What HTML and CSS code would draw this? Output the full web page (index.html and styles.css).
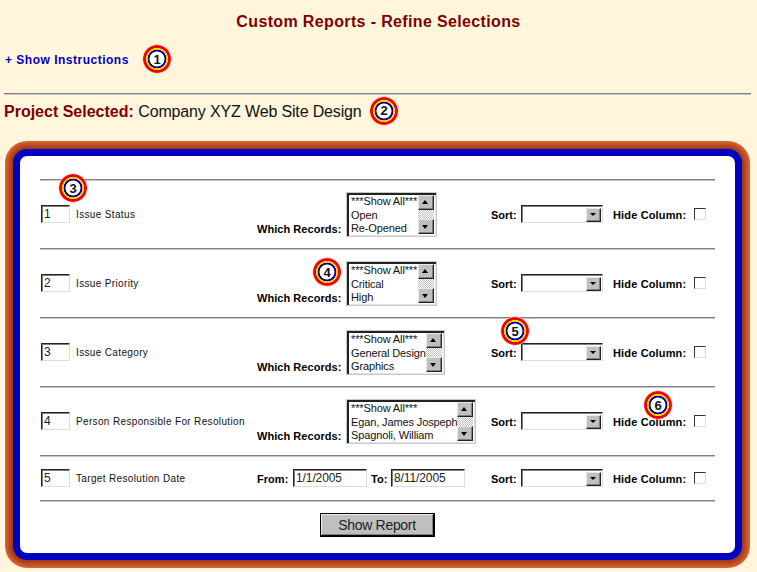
FILE: index.html
```html
<!DOCTYPE html>
<html lang="en">
<head>
<meta charset="utf-8">
<title>Custom Reports - Refine Selections</title>
<link rel="stylesheet" href="styles.css">
</head>
<body>
<h1 class="title">Custom Reports - Refine Selections</h1>
<div class="instructions">
  <a class="show-link" href="#"><span class="plus">+</span> Show Instructions</a>
  <span class="badge badge-1">1</span>
</div>
<hr class="rule page-rule">
<div class="project">
  <strong>Project Selected:</strong> <span class="project-name">Company XYZ Web Site Design</span>
  <span class="badge badge-2">2</span>
</div>
<form class="panel">
  <hr class="rule">
  <div class="row">
    <span class="badge badge-3">3</span>
    <div class="field"><input class="order" type="text" value="1"><span class="name">Issue Status</span></div>
    <div class="filter">
      <label class="lab">Which Records:</label>
      <div class="listbox w91">
        <ul class="opts"><li>***Show All***</li><li>Open</li><li>Re-Opened</li></ul>
        <div class="scroll"><span class="sbtn up"></span><span class="track"></span><span class="sbtn down"></span></div>
      </div>
    </div>
    <div class="sort"><label class="lab">Sort:</label><div class="combo"><span class="sbtn down"></span></div></div>
    <div class="hide"><label class="lab">Hide Column:</label><input class="check" type="checkbox"></div>
  </div>
  <hr class="rule">
  <div class="row">
    <span class="badge badge-4">4</span>
    <div class="field"><input class="order" type="text" value="2"><span class="name">Issue Priority</span></div>
    <div class="filter">
      <label class="lab">Which Records:</label>
      <div class="listbox w91">
        <ul class="opts"><li>***Show All***</li><li>Critical</li><li>High</li></ul>
        <div class="scroll"><span class="sbtn up"></span><span class="track"></span><span class="sbtn down"></span></div>
      </div>
    </div>
    <div class="sort"><label class="lab">Sort:</label><div class="combo"><span class="sbtn down"></span></div></div>
    <div class="hide"><label class="lab">Hide Column:</label><input class="check" type="checkbox"></div>
  </div>
  <hr class="rule">
  <div class="row">
    <span class="badge badge-5">5</span>
    <div class="field"><input class="order" type="text" value="3"><span class="name">Issue Category</span></div>
    <div class="filter">
      <label class="lab">Which Records:</label>
      <div class="listbox w99">
        <ul class="opts"><li>***Show All***</li><li>General Design</li><li>Graphics</li></ul>
        <div class="scroll"><span class="sbtn up"></span><span class="track"></span><span class="sbtn down"></span></div>
      </div>
    </div>
    <div class="sort"><label class="lab">Sort:</label><div class="combo"><span class="sbtn down"></span></div></div>
    <div class="hide"><label class="lab">Hide Column:</label><input class="check" type="checkbox"></div>
  </div>
  <hr class="rule">
  <div class="row">
    <span class="badge badge-6">6</span>
    <div class="field"><input class="order" type="text" value="4"><span class="name">Person Responsible For Resolution</span></div>
    <div class="filter">
      <label class="lab">Which Records:</label>
      <div class="listbox w130">
        <ul class="opts"><li>***Show All***</li><li>Egan, James Jospeph</li><li>Spagnoli, William</li></ul>
        <div class="scroll"><span class="sbtn up"></span><span class="track"></span><span class="sbtn down"></span></div>
      </div>
    </div>
    <div class="sort"><label class="lab">Sort:</label><div class="combo"><span class="sbtn down"></span></div></div>
    <div class="hide"><label class="lab">Hide Column:</label><input class="check" type="checkbox"></div>
  </div>
  <hr class="rule">
  <div class="row row-date">
    <div class="field"><input class="order" type="text" value="5"><span class="name">Target Resolution Date</span></div>
    <div class="filter date-filter">
      <label class="lab">From:</label><input class="date" type="text" value="1/1/2005">
      <label class="lab to">To:</label><input class="date" type="text" value="8/11/2005">
    </div>
    <div class="sort"><label class="lab">Sort:</label><div class="combo"><span class="sbtn down"></span></div></div>
    <div class="hide"><label class="lab">Hide Column:</label><input class="check" type="checkbox"></div>
  </div>
  <hr class="rule">
  <div class="actions"><button class="submit" type="button">Show Report</button></div>
</form>
</body>
</html>
```

FILE: styles.css
```css
* { box-sizing: border-box; }
html, body { margin: 0; height: 572px; overflow: hidden; }
body { background: #fff6dc; font-family: "Liberation Sans", Arial, sans-serif; color: #000; }

.title { margin: 0; height: 48px; padding-top: 12px; text-align: center; font-size: 16px; line-height: 20px; font-weight: bold; color: #800000; letter-spacing: 0.36px; }
.instructions { height: 45px; padding-left: 5px; display: flex; align-items: flex-start; position: relative; }
.show-link { display: block; line-height: 24px; font-size: 12px; font-weight: bold; color: #0000c0; text-decoration: none; letter-spacing: 0.5px; }

.rule { display: block; height: 2px; margin: 0; border: 0; border-top: 1px solid #808080; border-bottom: 1px solid #c8c8c8; }
.page-rule { margin: 0 6px 0 4px; }

.project { position: relative; height: 54px; padding: 6px 0 0 4px; font-size: 16px; line-height: 22px; white-space: nowrap; }
.project strong { color: #800000; }
.project-name { letter-spacing: -0.15px; color: #111; }

.panel { margin: 0 15px 0 13px; height: 411px; padding: 23px 20px 0 20px; border: 7px solid #0000c0; border-radius: 14px; background: #fff; background-clip: padding-box;
  box-shadow: 0 0 0 1px #a23a18, 0 0 0 2px #a83e1a, 0 0 0 3px #b0441e, 0 0 0 4px #b84a22, 0 0 0 5px #c05026, 0 0 0 6px #c8562a, 0 0 0 7px #d05c2e, 0 0 0 8px #d8663a; }

.row { position: relative; height: 67px; display: flex; align-items: flex-start; padding-left: 1px; }
.row-date { height: 43px; }

.field { width: 216px; height: 18px; margin-top: 24px; display: flex; align-items: center; flex: none; }
.row-date .field { margin-top: 12px; }
.order { width: 29px; height: 18px; padding: 0 0 0 2px; font: 12px/14px "Liberation Sans", Arial, sans-serif; color: #222; border: 1px solid; border-color: #222 #ddd #ddd #222; background: #fff; box-shadow: inset 1px 1px 0 #808080; }
.name { margin-left: 6px; font-size: 10px; letter-spacing: 0.35px; white-space: nowrap; color: #111; }

.lab { font-size: 11px; font-weight: bold; white-space: nowrap; line-height: 13px; }

.filter { width: 234px; flex: none; display: flex; align-items: flex-end; height: 56px; }
.filter .lab { width: 86px; margin-bottom: 1px; letter-spacing: 0.05px; }
.listbox { margin: 11px 0 0 3px; height: 45px; display: flex; padding: 2px 2px 2px 3px; background: #fff; border: 1px solid #c8c8c8; box-shadow: inset 2px 2px 0 #222, inset -1px -1px 0 #e4e4e4; }
.w91 { width: 91px; }
.w99 { width: 99px; }
.w130 { width: 130px; }
.opts { flex: 1; min-width: 0; margin: 0; padding: 0 0 0 1px; list-style: none; font-size: 11px; letter-spacing: -0.12px; line-height: 13.5px; white-space: nowrap; color: #111; }
.scroll { width: 16px; flex: none; display: flex; flex-direction: column; }
.track { flex: 1; background: repeating-conic-gradient(#c0c0c0 0 25%, #fff 0 50%) 0 0 / 2px 2px; }
.sbtn { display: block; position: relative; width: 16px; height: 15px; flex: none; background: #c0c0c0; border: 1px solid; border-color: #e8e8e8 #222 #222 #e8e8e8; box-shadow: inset -1px -1px 0 #808080; }
.sbtn::after { content: ""; position: absolute; left: 3px; width: 0; height: 0; border-left: 3.5px solid transparent; border-right: 3.5px solid transparent; }
.up::after { top: 4px; border-bottom: 4px solid #000; }
.down::after { top: 5px; border-top: 4px solid #000; }

.date-filter { height: 18px; margin-top: 12px; align-items: center; }
.date-filter .lab { width: 36px; margin: 2px 0 0; }
.date-filter .lab.to { width: 20px; margin-left: 4px; }
.date { width: 74px; height: 18px; padding: 0 0 0 2px; font: 12px/14px "Liberation Sans", Arial, sans-serif; color: #222; letter-spacing: -0.1px; border: 1px solid; border-color: #222 #ddd #ddd #222; background: #fff; box-shadow: inset 1px 1px 0 #808080; }

.sort { width: 122px; flex: none; margin-top: 24px; height: 18px; display: flex; align-items: center; }
.row-date .sort, .row-date .hide { margin-top: 12px; }
.sort .lab { width: 30px; padding-top: 3px; }
.combo { width: 82px; height: 18px; display: flex; justify-content: flex-end; padding: 2px 1px 1px 0; background: #fff; border: 1px solid; border-color: #222 #ddd #ddd #222; box-shadow: inset 1px 1px 0 #808080; }
.combo .sbtn { width: 15px; height: 14px; }
.combo .sbtn::after { left: 3px; top: 4px; border-left-width: 3px; border-right-width: 3px; border-top-width: 3px; }

.hide { margin-top: 24px; height: 18px; display: flex; align-items: center; flex: none; }
.hide .lab { width: 81px; letter-spacing: 0.15px; padding-top: 3px; }
.check { appearance: none; -webkit-appearance: none; margin: 0; width: 12px; height: 12px; background: #fff; border: 1px solid; border-color: #333 #ddd #ddd #333; }

.actions { display: flex; justify-content: center; padding: 11px 0 0 0; }
.submit { width: 115px; height: 24px; padding: 0; font: 14px "Liberation Sans", Arial, sans-serif; letter-spacing: -0.3px; color: #222; background: #bfbfbf; border: 1px solid #000; border-right-width: 2px; border-bottom-width: 2px; box-shadow: inset 1px 1px 0 #eee, inset -1px -1px 0 #808080; }

.badge { position: absolute; width: 30px; height: 30px; display: flex; align-items: center; justify-content: center; border-radius: 50%; font-size: 13px; font-weight: bold; color: #111;
  background: radial-gradient(circle closest-side, #fff 0 7.2px, #0000a8 7.8px 9.1px, #ffd800 9.6px 10.8px, #f00000 11.4px 13.4px, #ffb8a8 14.1px, rgba(255,210,200,0) 15px); }
.badge-1 { left: 142px; top: -4px; }
.badge-2 { left: 369px; top: 1px; }
.badge-3 { left: 18px; top: -8px; }
.badge-4 { left: 272px; top: 7px; }
.badge-5 { left: 460px; top: -3px; }
.badge-6 { left: 603px; top: 2px; }
```
